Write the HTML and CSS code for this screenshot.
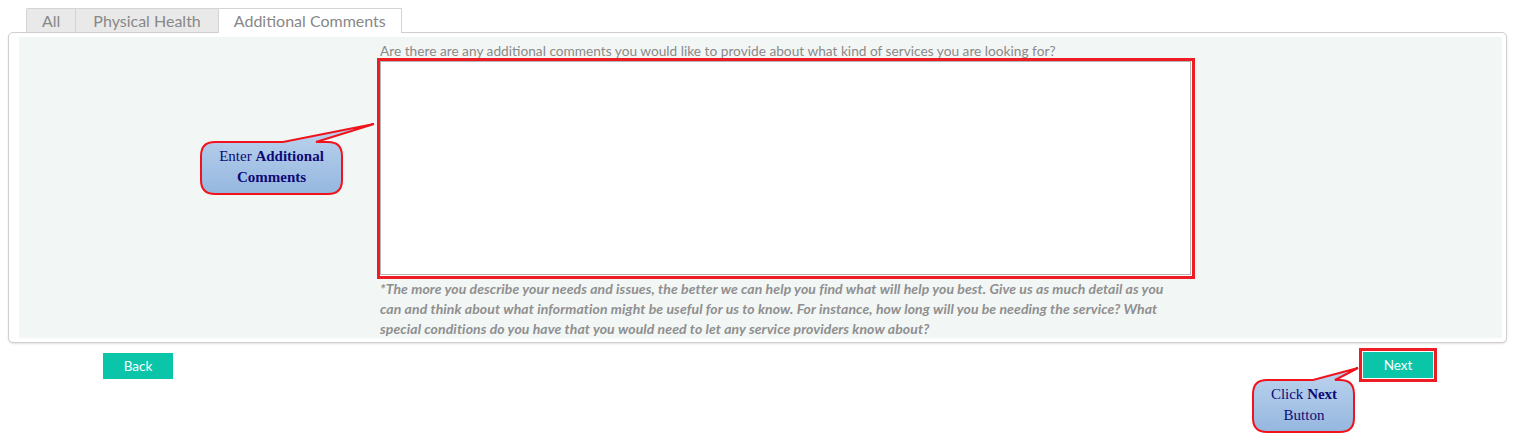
FILE: index.html
```html
<!DOCTYPE html>
<html lang="en">
<head>
<meta charset="utf-8">
<title>Additional Comments</title>
<link rel="stylesheet" href="styles.css">
</head>
<body>
<div class="page">
  <ul class="tabs">
    <li class="tab">All</li>
    <li class="tab">Physical Health</li>
    <li class="tab active">Additional Comments</li>
  </ul>
  <div class="panel">
    <div class="panel-inner">
      <div class="field">
        <label class="question">Are there are any additional comments you would like to provide about what kind of services you are looking for?</label>
        <div class="highlight">
          <textarea class="comments"></textarea>
        </div>
        <p class="hint">*The more you describe your needs and issues, the better we can help you find what will help you best. Give us as much detail as you can and think about what information might be useful for us to know. For instance, how long will you be needing the service? What special conditions do you have that you would need to let any service providers know about?</p>
      </div>
    </div>
  </div>
  <div class="actions">
    <button class="btn back">Back</button>
    <div class="highlight next-wrap"><button class="btn next">Next</button></div>
  </div>

  <div class="callout callout-comments">
    <svg width="190" height="90" viewBox="0 0 190 90">
      <defs>
        <linearGradient id="g1" x1="0" y1="0" x2="0" y2="1">
          <stop offset="0" stop-color="#bdd4ee"/>
          <stop offset="1" stop-color="#95b7df"/>
        </linearGradient>
      </defs>
      <path d="M20 30 H88 L179 12 L121 30 H133 Q147 30 147 44 V68 Q147 82 133 82 H20 Q6 82 6 68 V44 Q6 30 20 30 Z" fill="url(#g1)" stroke="#f0131b" stroke-width="2" stroke-linejoin="miter"/>
    </svg>
    <div class="callout-text ct1">Enter <b>Additional Comments</b></div>
  </div>

  <div class="callout callout-next">
    <svg width="120" height="70" viewBox="0 0 120 70">
      <defs>
        <linearGradient id="g2" x1="0" y1="0" x2="0" y2="1">
          <stop offset="0" stop-color="#bdd4ee"/>
          <stop offset="1" stop-color="#95b7df"/>
        </linearGradient>
      </defs>
      <path d="M17 16 H63 L108 4 L85 16 H90 Q104 16 104 30 V54 Q104 68 90 68 H17 Q3 68 3 54 V30 Q3 16 17 16 Z" fill="url(#g2)" stroke="#f0131b" stroke-width="2"/>
    </svg>
    <div class="callout-text ct2">Click <b>Next</b> Button</div>
  </div>
</div>
</body>
</html>
```

FILE: styles.css
```css
* { box-sizing: border-box; }
html, body { margin: 0; padding: 0; background: #fff; }
body { font-family: Lato, "Open Sans", "Noto Sans", sans-serif; color: #888; }

.page { position: relative; padding: 8px 22px 0 8px; width: 1529px; height: 447px; }

.tabs {
  list-style: none; margin: 0 0 0 18px; padding: 0;
  display: flex; height: 24px; position: relative; z-index: 2;
}
.tab {
  height: 24px; padding: 0 15px; font-size: 16px; line-height: 24px;
  color: #888; background: #e9e9e9; border: 1px solid #d4d4d4; border-bottom: none;
  border-right: none;
}
.tab:nth-child(2) { padding: 0 17px; }
.tab:first-child { border-radius: 2px 0 0 0; }
.tab.active { background: #fff; border-right: 1px solid #d4d4d4; height: 25px; color: #888; }

.panel {
  border: 1px solid #cfcfcf; border-radius: 5px;
  box-shadow: 0 1px 2px rgba(0,0,0,0.12);
  padding: 4px 4px 4px 10px; height: 311px; background: #fff;
}
.panel-inner { background: #f2f6f5; height: 301px; padding: 7px 0 0 358px; }

.field { width: 818px; }
.question { display: block; font-size: 13.7px; line-height: 14px; color: #8a8a8a; padding-left: 3px; white-space: nowrap; }

.highlight { border: 3px solid #ee1c25; }
.field .highlight { padding: 0 1px 1px 0; background: #fff; }
.comments {
  display: block; width: 811px; height: 214px; resize: none; margin: 0;
  border: 1px solid #b5b5b5; background: #fff; outline: none;
}
.hint {
  margin: 0; padding-left: 3px; width: 805px;
  font-size: 14px; letter-spacing: 0.1px; line-height: 20px; font-style: italic; font-weight: 700;
  color: #8f8f8f;
}

.actions { display: flex; justify-content: space-between; align-items: flex-start; padding: 6px 0 0 95px; margin-right: 70px; }
.btn {
  width: 70px; height: 26px; border: none; background: #0bc5a9; color: #fff;
  font-family: Lato, "Open Sans", sans-serif; font-size: 13.5px; padding: 0; margin-top: 4px;
}
.next-wrap { margin-top: -1px; }
.next-wrap .btn { margin: 1px; display: block; }

.callout { position: absolute; }
.callout svg { display: block; }
.callout-text {
  position: absolute; font-family: "Liberation Serif", "Times New Roman", serif;
  color: #0d0a78; font-size: 15px; line-height: 21px; text-align: center;
}
.callout-comments { left: 195px; top: 112px; }
.ct1 { left: 4px; top: 34px; width: 145px; }
.callout-next { left: 1250px; top: 364px; }
.ct2 { left: 3px; top: 20px; width: 102px; }
```
